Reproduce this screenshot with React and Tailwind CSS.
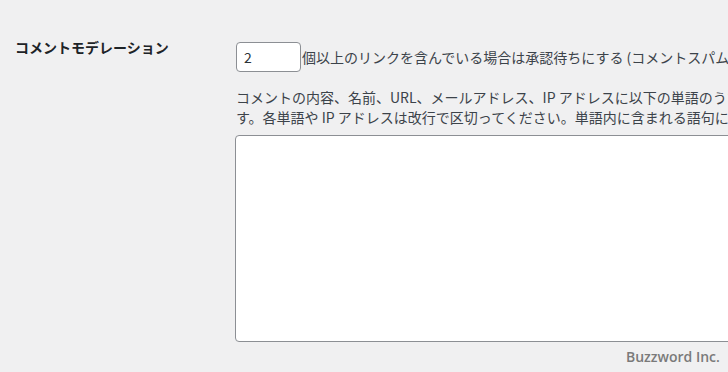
import React from "react";

export default function App() {
  const font = { fontFamily: '"Noto Sans CJK JP", "Noto Sans", sans-serif' };
  return (
    <div
      className="relative h-[372px] w-[728px] overflow-hidden bg-[#f0f0f1] text-[14px] text-[#3c434a]"
      style={font}
    >
      <div className="flex pl-[15px]">
        <div className="w-[221px] shrink-0 pt-[37px]">
          <div className="text-[14px] font-bold leading-[20px] text-[#1d2327]">
            コメントモデレーション
          </div>
        </div>
        <div className="shrink-0 pt-[42px]">
          <div className="flex items-center whitespace-nowrap">
            <div className="flex h-[30px] w-[65px] items-center rounded-[4px] border border-[#8c8f94] bg-white pl-[7px] text-[14px] text-[#2c3338]">
              2
            </div>
            <span className="ml-px leading-[20px]">
              個以上のリンクを含んでいる場合は承認待ちにする (コメントスパムに共通する特徴のひとつに多数のリンクがあります。)
            </span>
          </div>
          <div className="mt-[15px] whitespace-nowrap leading-[20px]">
            <div>
              コメントの内容、名前、URL、メールアドレス、IP アドレスに以下の単語のうち一つでも含まれていれば、そのコメントはモデレーション待ちになりま
            </div>
            <div>
              す。各単語や IP アドレスは改行で区切ってください。単語内に含まれる語句にもマッチします。例: 「press」は「WordPress」にマッチします。
            </div>
          </div>
          <div className="ml-[-1px] mt-[8px] h-[207px] w-[600px] rounded-[4px] border border-[#8c8f94] bg-white"></div>
        </div>
      </div>
      <div
        className="absolute left-[626px] top-[347px] text-[14px] font-semibold leading-[20px] text-[#7a7a7a]"
        style={{ fontFamily: '"Open Sans", "Noto Sans", sans-serif' }}
      >
        Buzzword Inc.
      </div>
    </div>
  );
}
